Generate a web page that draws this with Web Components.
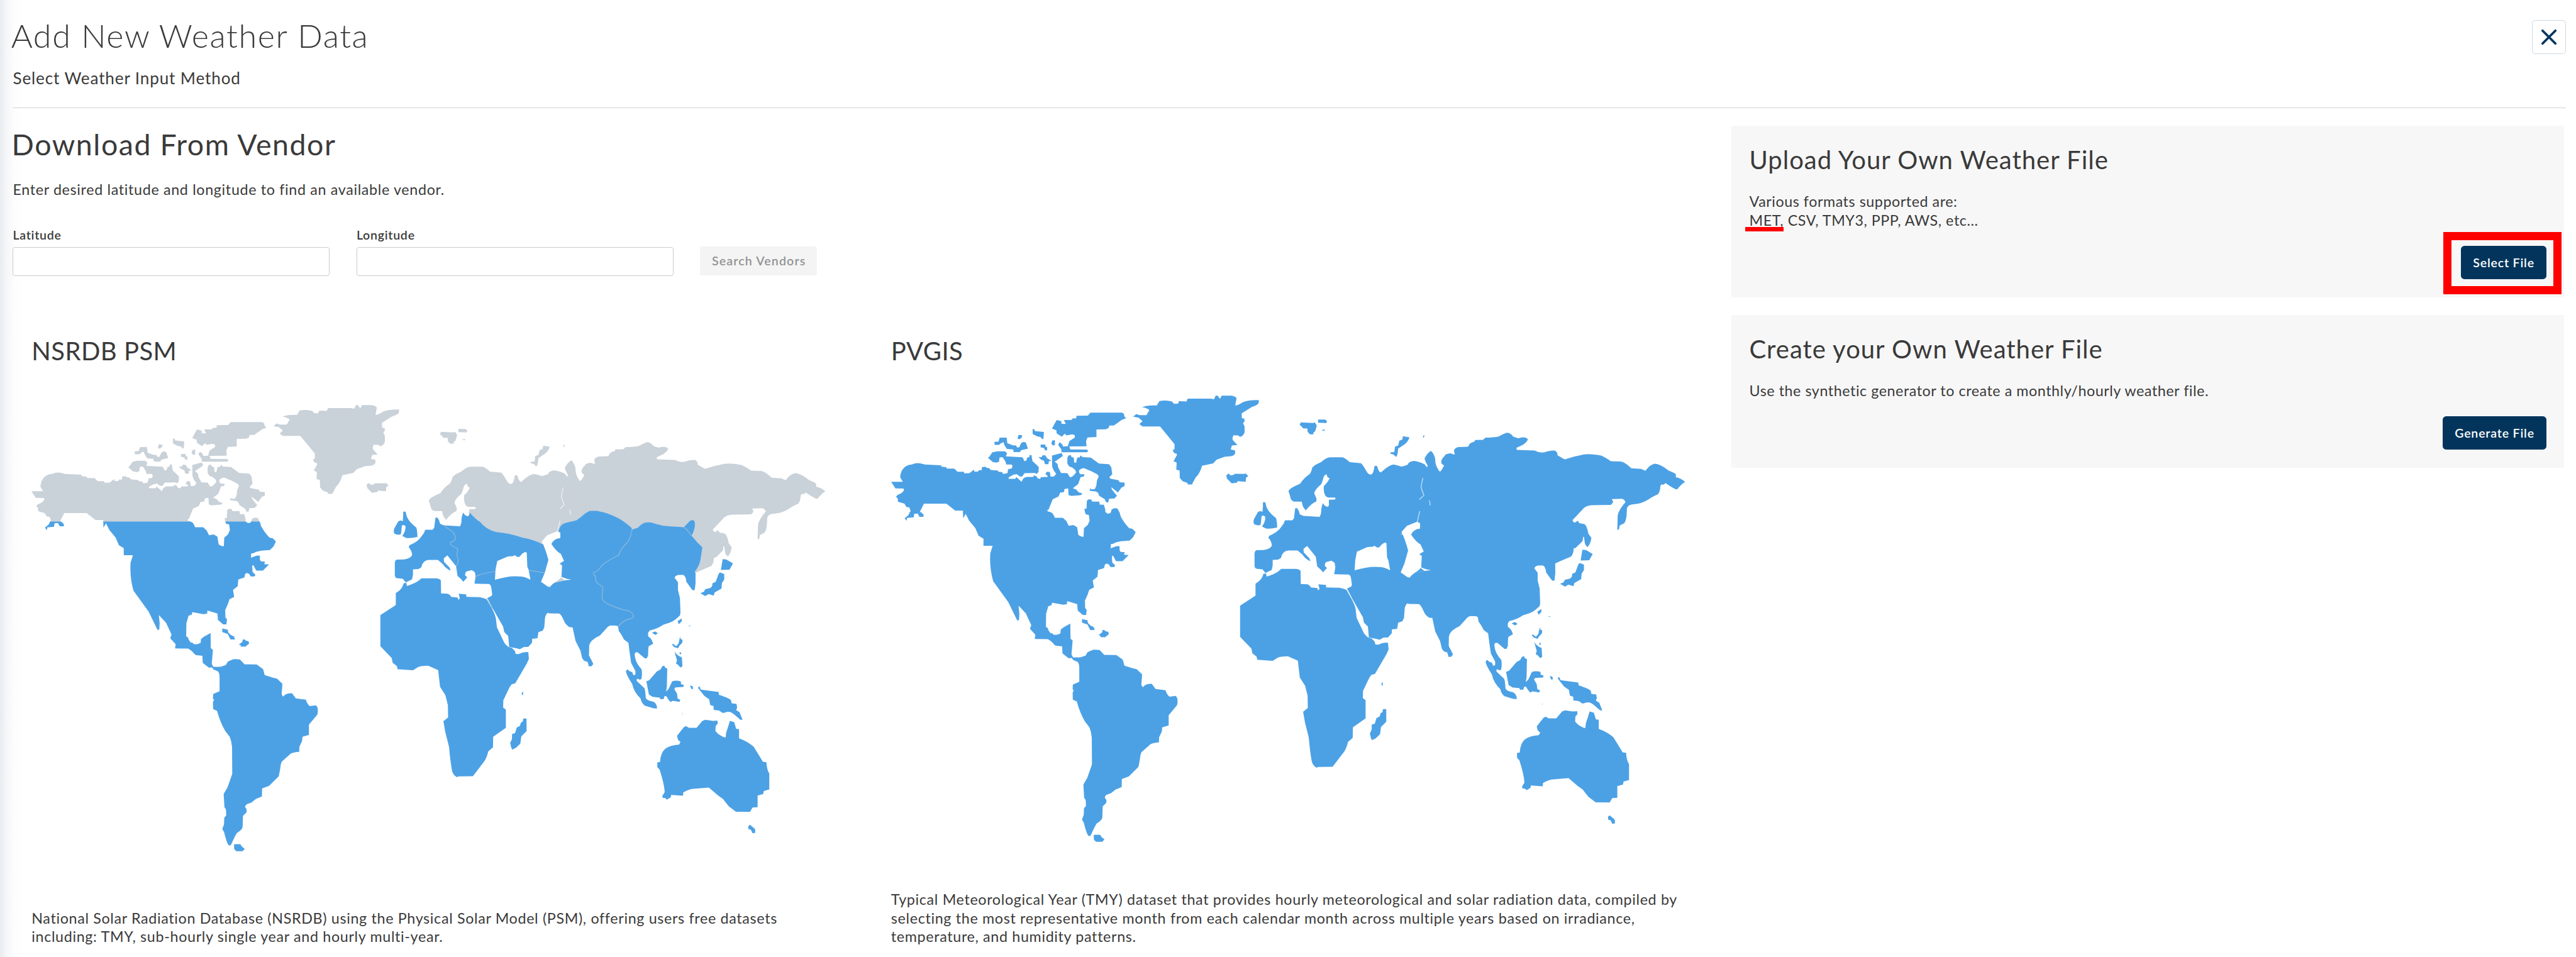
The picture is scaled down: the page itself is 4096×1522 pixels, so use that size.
<!DOCTYPE html>
<html lang="en">
<head>
<meta charset="utf-8">
<title>Add New Weather Data</title>
<style>
    html, body {
        margin: 0;
        background: #fff;
        overflow: hidden;
    }
</style>
</head>
<body>
<weather-page>
    <page-header slot="header" title="Add New Weather Data" subtitle="Select Weather Input Method"></page-header>
    <vendor-search slot="search"></vendor-search>
    <vendor-card slot="vendor" name="NSRDB PSM">
        <world-map coverage="partial" slot="map"></world-map>
        National Solar Radiation Database (NSRDB) using the Physical Solar Model (PSM), offering users free datasets<br>including: TMY, sub-hourly single year and hourly multi-year.
    </vendor-card>
    <vendor-card slot="vendor" name="PVGIS">
        <world-map slot="map"></world-map>
        Typical Meteorological Year (TMY) dataset that provides hourly meteorological and solar radiation data, compiled by<br>selecting the most representative month from each calendar month across multiple years based on irradiance,<br>temperature, and humidity patterns.
    </vendor-card>
    <file-panel slot="side" heading="Upload Your Own Weather File">
        Various formats supported are:<br><mark-under>MET,</mark-under> CSV, TMY3, PPP, AWS, etc...
        <action-button slot="action" highlighted>Select File</action-button>
    </file-panel>
    <file-panel slot="side" heading="Create your Own Weather File" compact>
        Use the synthetic generator to create a monthly/hourly weather file.
        <action-button slot="action">Generate File</action-button>
    </file-panel>
</weather-page>

<script>
class WeatherPage extends HTMLElement {

    constructor() {
        super();
        this.root = this.attachShadow({ mode: 'open' });
        this.root.innerHTML = `<style>
    :host {
        display: flex;
        flex-direction: column;
        box-sizing: border-box;
        width: 4400px;
        height: 1635px;
        padding: 0 17px 0 22px;
        overflow: hidden;
        zoom: .93091;
        color: #3a3a3a;
        font: 25px/32px Lato, "Open Sans", sans-serif;
        letter-spacing: .72px;
        background: linear-gradient(90deg, #e9ecf0 0, #f6f7f9 12px, #fdfdfe 26px, #fff 40px);
    }

    .content {
        flex: 1;
        display: grid;
        grid-template-columns: 2935px 1423px;
        min-height: 0;
    }

    .main {
        display: flex;
        flex-direction: column;
        min-height: 0;
    }

    .vendors {
        flex: 1;
        display: grid;
        grid-template-columns: 1468px 1467px;
    }

    .side {
        display: flex;
        flex-direction: column;
        gap: 30px;
        padding-top: 30px;
    }
</style>
<slot name="header"></slot>
<div class="content">
    <div class="main">
        <slot name="search"></slot>
        <div class="vendors"><slot name="vendor"></slot></div>
    </div>
    <div class="side"><slot name="side"></slot></div>
</div>`;
    }
}
customElements.define('weather-page', WeatherPage);

class PageHeader extends HTMLElement {

    constructor() {
        super();
        this.root = this.attachShadow({ mode: 'open' });
        this.root.innerHTML = `<style>
    :host {
        display: flex;
        justify-content: space-between;
        align-items: flex-start;
        box-sizing: border-box;
        height: 185px;
        padding-top: 26px;
        border-bottom: 2px solid #d3d3d3;
    }

    .title {
        margin: 0 0 0 -3px;
        font-size: 56px;
        line-height: 70px;
        font-weight: 300;
        letter-spacing: 1.7px;
    }

    .subtitle {
        margin: 20px 0 0;
        font-size: 28px;
        line-height: 36px;
        letter-spacing: .95px;
    }

    .close {
        display: flex;
        align-items: center;
        justify-content: center;
        box-sizing: border-box;
        width: 58px;
        height: 58px;
        margin-top: 8px;
        padding: 0;
        border: 2px solid #ccd7e1;
        border-radius: 6px;
        background: #fff;
    }
</style>
<div>
    <h1 class="title"></h1>
    <p class="subtitle"></p>
</div>
<button class="close" aria-label="Close">
    <svg width="28" height="28" viewBox="0 0 28 28" fill="none" stroke="#03355c" stroke-width="4" stroke-linecap="round">
        <path d="M3 3l22 22M25 3L3 25"></path>
    </svg>
</button>`;
    }

    static get observedAttributes() {
        return ['title', 'subtitle'];
    }

    attributeChangedCallback(attrName, oldVal, newVal) {
        this.root.querySelector('.' + attrName).textContent = newVal;
    }
}
customElements.define('page-header', PageHeader);

class TextField extends HTMLElement {

    constructor() {
        super();
        this.root = this.attachShadow({ mode: 'open' });
        this.root.innerHTML = `<style>
    :host {
        display: flex;
        flex-direction: column;
        width: 541px;
    }

    label {
        font-size: 21px;
        line-height: 26px;
        font-weight: 600;
        letter-spacing: .8px;
        margin-bottom: 7px;
    }

    input {
        box-sizing: border-box;
        width: 100%;
        height: 50px;
        border: 2px solid #cbcbcb;
        border-radius: 4px;
        background: #fff;
    }
</style>
<label><slot></slot></label>
<input type="text">`;
    }
}
customElements.define('text-field', TextField);

class VendorSearch extends HTMLElement {

    constructor() {
        super();
        this.root = this.attachShadow({ mode: 'open' });
        this.root.innerHTML = `<style>
    :host {
        display: block;
        padding-top: 32px;
    }

    h2 {
        margin: 0 0 0 -2px;
        font-size: 50px;
        line-height: 60px;
        font-weight: 400;
        letter-spacing: 1.65px;
    }

    p {
        margin: 31px 0 0;
    }

    .row {
        display: flex;
        align-items: flex-end;
        gap: 46px;
        margin-top: 49px;
    }
</style>
<h2>Download From Vendor</h2>
<p>Enter desired latitude and longitude to find an available vendor.</p>
<div class="row">
    <text-field>Latitude</text-field>
    <text-field>Longitude</text-field>
    <action-button disabled>Search Vendors</action-button>
</div>`;
    }
}
customElements.define('vendor-search', VendorSearch);

class ActionButton extends HTMLElement {

    constructor() {
        super();
        this.root = this.attachShadow({ mode: 'open' });
        this.root.innerHTML = `<style>
    :host {
        display: block;
        position: relative;
    }

    button {
        display: block;
        height: 57px;
        padding: 0 20px 0 21px;
        border: 0;
        border-radius: 6px;
        background: #03355c;
        color: #fff;
        font: 600 21px/57px Lato, "Open Sans", sans-serif;
        letter-spacing: .9px;
        white-space: nowrap;
    }

    :host([disabled]) button {
        height: 50px;
        line-height: 50px;
        margin-bottom: 1px;
        padding: 0 19px 0 20px;
        border-radius: 4px;
        background: #f4f4f4;
        color: #939393;
        letter-spacing: 1.25px;
    }

    /* marker frame drawn around the button */
    :host([highlighted])::after {
        content: "";
        position: absolute;
        inset: -24px -26px -26px -30px;
        border: 14px solid #f00;
    }
</style>
<button><slot></slot></button>`;
    }
}
customElements.define('action-button', ActionButton);

class MarkUnder extends HTMLElement {

    constructor() {
        super();
        this.root = this.attachShadow({ mode: 'open' });
        this.root.innerHTML = `<style>
    :host {
        display: inline-block;
        position: relative;
    }

    :host::after {
        content: "";
        position: absolute;
        left: -7px;
        width: 66px;
        bottom: -2px;
        height: 7px;
        background: #f00;
    }
</style><slot></slot>`;
    }
}
customElements.define('mark-under', MarkUnder);

class FilePanel extends HTMLElement {

    constructor() {
        super();
        this.root = this.attachShadow({ mode: 'open' });
        this.root.innerHTML = `<style>
    :host {
        display: flex;
        flex-direction: column;
        box-sizing: border-box;
        height: 293px;
        padding: 31px;
        background: #f7f7f7;
        letter-spacing: .6px;
    }

    :host([compact]) {
        height: 261px;
    }

    h2 {
        margin: 0 0 29px;
        font-size: 43px;
        line-height: 54px;
        font-weight: 400;
        letter-spacing: 1.05px;
    }

    .action {
        display: flex;
        justify-content: flex-end;
        margin-top: auto;
    }
</style>
<h2></h2>
<div class="text"><slot></slot></div>
<div class="action"><slot name="action"></slot></div>`;
    }

    static get observedAttributes() {
        return ['heading'];
    }

    attributeChangedCallback(attrName, oldVal, newVal) {
        this.root.querySelector('h2').textContent = newVal;
    }
}
customElements.define('file-panel', FilePanel);

class VendorCard extends HTMLElement {

    constructor() {
        super();
        this.root = this.attachShadow({ mode: 'open' });
        this.root.innerHTML = `<style>
    :host {
        display: flex;
        flex-direction: column;
        box-sizing: border-box;
        padding: 101px 32px 18px;
    }

    h2 {
        margin: 0;
        font-size: 43px;
        line-height: 54px;
        font-weight: 400;
        letter-spacing: .5px;
    }

    .map {
        flex: 1;
        display: flex;
        align-items: center;
        padding-bottom: 34px;
    }

    .text {
        white-space: nowrap;
    }
</style>
<h2></h2>
<div class="map"><slot name="map"></slot></div>
<div class="text"><slot></slot></div>`;
    }

    static get observedAttributes() {
        return ['name'];
    }

    attributeChangedCallback(attrName, oldVal, newVal) {
        this.root.querySelector('h2').textContent = newVal;
    }
}
customElements.define('vendor-card', VendorCard);

class WorldMap extends HTMLElement {

    constructor() {
        super();
        this.root = this.attachShadow({ mode: 'open' });
        this.root.innerHTML = `<style>
    :host {
        display: block;
        --covered: #4ca1e5;
        --uncovered: #4ca1e5;
        --border: none;
    }

    :host([coverage="partial"]) {
        --uncovered: #c9d1d9;
        --border: #8fb9da;
    }

    svg {
        display: block;
    }

    .off {
        fill: var(--uncovered);
    }

    .on {
        fill: var(--covered);
    }

    .sea {
        fill: #fff;
    }

    .line {
        fill: none;
        stroke: var(--border);
        stroke-width: 4;
    }

    .river {
        fill: none;
        stroke: #fff;
        stroke-opacity: .7;
        stroke-width: 4;
        stroke-linecap: round;
    }
</style>
<svg width="1356" height="763" viewBox="72 96 4068 2289">
    <!-- alaska, canada -->
    <g class="off">
        <path d="M72 538L132 538 118 515Q122 465 162 452L180 449Q200 440 222 444L245 450 328 454 330 461 354 463 358 471 395 471 412 487 444 487 447 495 473 494 496 476 499 487 517 486 522 479 536 479 537 463 555 461 561 467 574 468 583 478 618 480 622 487 640 488 646 498 668 494 671 474 690 470 694 457 688 450 662 450 658 435 645 415 640 412 627 414 625 435 612 440 592 437 568 415 576 409 590 388 615 382 655 382 666 392 660 408 745 413 755 433 766 428 768 415 780 411 781 401 791 401 796 432 828 462 827 488 817 498 810 493 755 494 744 511 730 511 717 500 700 501 674 516 674 523 708 523 714 514 740 538 750 520 765 513 800 513 803 505 817 510 822 520 835 524 840 514 873 513 874 508 862 499 870 487 885 488 889 512 905 512 918 498 905 480 897 460 896 404 945 391 952 405 935 418 910 435 925 447 928 465 943 493 975 494 988 515 1000 512 1010 502 1020 490 1015 478 1000 465 985 460 975 445 975 415 981 403 993 402 995 410 1008 415 1010 440 1020 440 1025 415 1038 413 1043 403 1053 412 1095 414 1137 445 1188 448 1200 463 1205 500 1190 515 1195 522 1237 530 1243 541 1268 542 1268 560 1252 568 1234 593 1200 566 1203 578 1229 610 1216 624 1189 625 1184 645 1173 642 1167 628 1138 610 1132 595 1122 588 1089 584 1092 571 1098 577 1115 576 1123 560 1127 530 1136 510 1128 500 1100 485Q1075 475 1060 468 1040 470 1034 482 1034 495 1042 500L1062 500 1060 511 1043 514 1030 550 1003 571 1020 578 1033 592 1052 598 1044 607 995 611 981 606 979 572 960 575 958 591 938 594 930 613 900 628 878 682 872 682 874 690 890 694 890 696 440 696 440 686 400 686 355 650 240 650 217 696 167 696 172 688 165 670 150 667 140 650 107 641 105 621 96 617 104 606Q132 595 138 580L136 573 94 572Z"></path>
        <path d="M1062 676L1073 676 1075 635 1085 628 1099 630 1101 640 1138 640 1141 655 1162 656 1169 680 1170 696 1066 696ZM1197 696L1202 680Q1215 671 1232 675L1242 696Z"></path>
        <path d="M896 265L920 222 944 227 945 241 967 242 957 222 998 221 1000 214 1020 213 1022 200 1080 199 1093 184 1255 184 1265 190 1267 203 1276 213 1255 220 1213 250 1190 250 1187 262 1172 269 1124 270 1124 309 1078 311 1071 330 1073 356 985 357 990 372 1075 373 1082 380 1075 387 945 387 944 372 928 350 935 335 950 347 952 357 977 356 985 330 1013 312 1013 300 1000 295 970 301 962 292 946 307 920 290 919 275Z"></path>
        <path d="M797 268L807 270 808 278 855 283 852 318 848 320 835 308 822 306 797 293ZM724 298L743 300 742 310 730 320 720 318ZM601 334L622 332 628 312 664 312 667 340 695 351 712 352 717 362 728 362 738 340 750 334 762 337 773 368 738 376 732 386 700 386 697 372 665 370 652 350 648 335 635 340 625 349 602 349ZM838 347L862 347 863 358 872 362 870 378 860 376 855 365 838 362ZM897 327L911 325 911 350 900 352 893 342ZM827 411L843 412 848 402 862 403 872 418 893 430 880 433 878 448 860 448 855 430 840 425Z"></path>
    </g>
    <g class="on">
        <path d="M440 694L885 694Q898 696 902 704L911 723 952 723 970 740 982 764 1006 760 1025 771 1031 810Q1040 820 1058 820L1060 776 1079 760 1089 737 1085 708 1069 705 1066 694 1170 694 1182 702 1196 699 1197 694 1242 694 1249 718Q1270 755 1292 776L1308 779 1325 796 1312 822 1294 840 1250 843 1222 849 1210 856 1198 857 1197 879 1225 869 1242 868 1243 890 1248 898 1269 899 1265 912 1289 914 1258 945 1224 945 1209 917 1203 920 1205 952 1220 967 1215 975 1195 975 1188 962 1175 957 1167 963 1163 981 1132 990 1129 1025 1105 1044 1111 1080 1087 1092 1078 1118 1065 1147 1066 1185 1074 1195 1071 1221 1054 1221 1028 1198 1025 1165 974 1150 972 1166 953 1168 897 1158 893 1171 877 1176 866 1215 865 1282 875 1288 878 1300 888 1313 900 1316 903 1322 922 1322 939 1316 941 1296 955 1284 990 1265 991 1342 1002 1352 996 1423 1005 1440 982 1443 950 1418 948 1382 913 1378 892 1356 875 1345 808 1344 811 1322 783 1292 790 1273 762 1213 725 1173 729 1215 727 1247 718 1249 672 1155 640 1110 595 1048Q575 980 580 905L592 866 545 866 545 830 520 815 503 775 472 738 454 703 441 725Z"></path>
        <path d="M167 694L225 694 238 707 238 718 217 718 208 701 190 703 188 720 153 724 152 738 141 725 161 708Z"></path>
    </g>
    <!-- caribbean, south america -->
    <g class="on" transform="translate(510 1200)">
        <path d="M540 42L568 48 570 62 583 75 600 83 605 98 582 98 568 70 540 60ZM624 125L643 110 645 98 655 98 658 103 675 108 677 120 658 135 634 134 634 126Z"></path>
        <path d="M485 238L530 238 558 229 568 212Q590 200 605 199L630 200 654 225 716 226 749 250 757 280Q775 287 820 299L848 325 844 380 852 391Q865 373 898 374L917 400 968 407Q975 430 988 440L1020 436Q1035 450 1027 483L984 535 984 587 951 597 949 618 935 648 934 674Q905 675 890 684L844 725Q838 740 836 765L829 800 780 848 744 862 743 903 713 915 688 934 664 943 656 955 665 970 664 984 646 1002 644 1060Q640 1075 615 1090 605 1105 584 1152L575 1154Q565 1150 549 1085L540 1070 549 1045 550 1012 560 1000 559 970 551 958 547 890 567 855 591 787 590 650Q588 620 578 597L555 567Q530 525 513 464L493 455 492 420 498 405 492 403 493 378 526 363 526 290Q525 268 517 261L495 252Z"></path>
        <path d="M600 1148L632 1147 641 1160 655 1171 644 1183 612 1183 601 1173Z"></path>
    </g>
    <!-- greenland, iceland, svalbard, north europe -->
    <g class="off" transform="translate(1230 0)">
        <path d="M82 205L98 191 115 197 150 197 165 172Q160 163 128 156 150 145 203 147L217 124Q255 118 280 127L292 139 312 138 317 125 355 127 362 112 480 112 496 115 505 97 515 97 527 113 536 97 585 97Q605 100 612 110L605 147Q620 147 645 130 680 118 727 120L724 137Q715 147 690 155L638 188 639 212 652 215 653 228 645 238 653 255 653 285Q645 305 630 308L620 301 596 300Q588 315 593 325L616 350 588 352 582 372 605 378 604 395Q595 408 575 408L550 410 510 425 492 444 435 456Q425 495 403 515L383 552 362 552 360 544 335 535 321 518 320 480 303 476 305 440 289 433 307 400 303 393 293 392 284 376 294 371 294 345 220 255 130 255 114 243 130 227 110 210Z"></path>
        <path d="M559 505L572 496 580 505 597 503 603 497 650 498 659 496 672 509 660 517 659 538 617 535 615 542 587 546 563 522ZM935 247L941 234 1003 237 1013 234 1023 250 1015 280 1007 284 1005 295 988 295 976 282 975 265 953 264 945 254ZM1029 219L1065 219 1075 226 1073 237 1030 235ZM1047 273L1064 270 1062 278Z"></path>
        <path d="M878 585Q885 570 938 548 955 520 985 500 995 490 1000 465 1015 450 1045 438 1070 415 1090 413L1155 413Q1170 418 1192 438L1250 443Q1262 455 1278 485 1290 505 1305 500 1315 490 1318 460 1325 450 1333 460 1340 490 1352 490 1390 455 1415 450 1430 452 1455 460 1470 460 1490 450 1490 436 1520 431 1540 432 1575 448L1588 465 1591 455Q1580 438 1575 420 1585 395 1607 380 1620 385 1630 420 1628 455 1653 486 1660 485 1675 455L1661 443 1661 430Q1670 405 1705 392L1730 400 1727 375Q1735 362 1750 360L1797 359 1797 700 1500 810 1400 800 1100 780 1085 650 1085 630 1115 629 1120 622 1115 619 1080 619 1068 612Q1055 590 1060 558 1075 548 1089 520L1078 515 1073 500Q1065 502 1058 512 1055 530 1046 550 1010 580 1010 598L1022 625 1020 640Q1000 645 966 685L952 665 946 640 905 640Q888 632 887 615Z"></path>
    </g>
    <g class="off" transform="translate(2430 90)">
        <path d="M264 215L298 220Q290 245 270 258L240 278Q238 310 230 321L215 308 200 304 200 298 220 296 224 268 240 262 246 238 262 231ZM368 212L374 209 373 219 368 224Z"></path>
    </g>
    <!-- siberia, far east -->
    <g class="off" transform="translate(2910 180)">
        <path d="M0 220Q20 208 50 220L47 195Q55 182 75 181L115 180Q123 175 125 165 135 155 150 153L155 144 195 143 207 132Q250 131 275 126 310 107 320 107 335 108 350 127L375 135Q410 123 425 140 420 155 400 168L366 184 368 195 460 198Q490 212 510 207 545 195 565 199L575 210 577 223 600 236Q612 247 625 240 660 228 690 223 730 210 800 224 820 232 850 253L900 254Q920 255 955 289L1005 292 1027 302Q1050 270 1075 266 1100 265 1145 300L1175 313 1184 322 1182 334Q1215 342 1230 359 1210 370 1190 397 1180 400 1130 365L1122 372 1108 373Q1102 380 1103 390 1100 415 1090 423 1075 430 1060 437 1020 465 990 470L955 475Q930 480 932 505 930 565 915 573L895 582 892 600Q885 610 883 600L885 530Q888 505 925 462 920 447 905 445L855 447 862 463 850 477 750 478Q720 480 705 500L670 537 653 555 660 567 670 565 680 557 688 570 715 575Q728 585 735 625L750 645Q748 670 732 692 725 692 717 675L712 640 708 640 705 662 670 697 659 700Q660 725 645 742L590 765 562 778 500 700 400 600 0 520Z"></path>
    </g>
    <!-- british isles -->
    <g class="on" transform="translate(1230 0)">
        <path d="M747 643L759 643 766 670Q780 700 815 725 820 750 820 773 780 782 760 777L742 767Q760 745 759 718 750 706 740 715 738 745 735 758 725 765 703 757 695 745 702 728L722 692 735 688 745 692 747 665Z"></path>
    </g>
    <!-- europe, middle east, india -->
    <g transform="translate(1830 540)">
        <path class="on" d="M355 173L438 178 445 160Q445 125 455 108L463 120 478 127 485 120 488 108Q520 145 540 155 570 195 625 208 690 213 760 237 810 245 862 270L943 203Q950 170 975 162L1035 147Q1060 130 1080 112L1102 99 1140 99Q1200 110 1250 137 1290 160 1318 188L1320 640 1248 692 1240 687 1210 686Q1195 690 1185 705L1155 738Q1105 760 1100 790L1099 840 1110 860 1121 884 1112 895 1098 896 1092 873 1075 868Q1065 860 1063 850L1055 815 1030 765 1020 720 1015 696 1000 695Q980 685 972 665 955 625 945 625L895 624 887 621Q873 635 873 655L870 695 862 713 840 720 835 752 808 755 807 775 788 796 765 797 745 808 728 803 690 797 685 740 665 720 659 692 635 650 605 598 578 545 600 535 603 525 598 490Q595 475 585 474L512 472 518 437 515 415Q505 405 497 403L470 410Q462 420 465 430L475 440 455 462 445 450 425 432 418 383 400 360Q380 335 373 327L355 342 356 360 385 390 390 405Q365 395 350 372L325 350 275 350Q245 355 240 388L225 397 197 399 197 425 192 450 160 466 145 447 115 444Q104 442 104 425L104 365Q106 350 115 349L150 348Q185 345 193 325 190 300 175 285L180 275Q225 255 240 230 255 215 260 196L298 196 306 185 312 135 320 132 330 145 336 165Z"></path>
        <path class="sea" d="M617 452L620 400 629 356 655 345 683 333 710 331 718 326 732 335 743 334 757 318 772 309 780 313 783 385 790 402 799 452Q770 435 740 435 690 430 617 452ZM857 255L885 224 937 203 952 210 952 238Q920 240 906 268 930 305 955 320L971 355 948 370 961 378 958 437 985 447 1008 451 975 455 930 465Q912 470 900 489L888 487 853 462 872 417 891 350Q875 290 857 255Z"></path>
        <path class="off" d="M918 468Q945 455 955 440L975 455Z"></path>
        <path class="line" d="M358 173Q370 188 385 195 415 215 415 240 410 255 390 260 383 272 405 282 430 290 425 305 418 325 428 345 432 365 418 383M515 437Q550 418 618 410M790 402L872 417M578 545L605 600"></path>
    </g>
    <!-- china, indochina, sumatra -->
    <g transform="translate(2910 180)">
        <path class="on" d="M240 555L270 545Q295 520 310 519 340 515 355 524 390 535 430 538L505 543 538 509Q550 504 558 510 570 535 545 587L575 622 600 646 590 710Q585 740 560 772L565 778 565 830 561 864 552 866 545 860 518 822Q515 790 500 787L475 788Q460 793 458 802L475 825 475 865 485 905 487 960Q490 995 480 1000 455 1025 430 1033L400 1042Q370 1063 330 1072 318 1083 323 1103 340 1112 348 1140L325 1153Q322 1165 322 1200L315 1215 305 1215 270 1185Q255 1178 253 1195 255 1235 288 1270 293 1290 288 1320L280 1324 265 1319 263 1330 303 1368Q308 1380 310 1418 317 1433 350 1437 368 1448 368 1472L350 1471 305 1457Q288 1445 283 1420 250 1390 240 1345 210 1300 208 1280L216 1271 228 1282 240 1285 247 1302 257 1298 257 1280 235 1238 228 1190 221 1135 198 1118Q185 1090 172 1075L168 1050 168 620Z"></path>
        <path class="on" d="M704 706L722 708 757 728 739 760 695 762ZM682 785Q685 775 692 775L712 783 712 810 700 830 698 857 663 877 658 893 632 885 615 896 590 881 608 873 615 860 640 855 650 845 652 830 668 823ZM473 1025L494 1010 494 1025 480 1040ZM341 1084L358 1077 372 1086 360 1095ZM528 1048L539 1046 537 1051Z"></path>
        <path class="line" d="M240 555Q235 590 215 622 180 655 172 685L160 692Q95 725 80 745 65 770 45 773 37 780 52 795 50 820 65 832 90 845 90 855L85 905Q95 930 130 943 190 968 225 972 250 985 247 1003 240 1012 220 1014 195 1022 168 1052M505 543L520 555 545 587"></path>
    </g>
    <path class="river" transform="translate(2430 90)" d="M367 430Q358 460 358 480L372 518 350 538M399 545Q405 555 403 568M350 600L338 655"></path>
    <!-- africa, madagascar -->
    <g class="on" transform="translate(1770 1200)">
        <path d="M90 -27L169 -78 169 -140Q200 -155 210 -190L223 -192 226 -176Q280 -192 300 -215L375 -215Q390 -215 400 -205L401 -138 435 -136Q450 -130 452 -120L485 -117 491 -104 497 -115 491 -136 530 -133 531 -120 600 -119Q620 -115 635 -108L665 -55Q678 -30 682 -10L687 35 725 115Q738 132 748 137L765 142 780 158 783 172 798 173Q825 160 848 163L851 198 840 222 781 323 763 328 752 343 720 410 719 447 733 457 733 551 668 597 667 651 643 672Q635 705 623 722L564 799 490 800 482 804Q462 792 457 770 448 720 442 650L436 625Q420 570 413 517L437 498 436 435 423 383 396 341 386 255 335 233Q290 235 283 240L257 256 178 250 175 235 153 217 148 193 90 133Z"></path>
        <path d="M822 503L839 503 839 568 812 595 807 632 785 653 765 663 760 650 755 628 764 610 765 582 780 578 789 549 805 541 810 525 820 518ZM821 364L821 386 813 375Z"></path>
    </g>
    <!-- south east asia, oceania -->
    <g class="on" transform="translate(2910 1140)">
        <path d="M313 372L328 367 367 322 385 312 395 295 405 293 410 303 420 307 418 400 414 425 427 412 445 373Q465 366 490 373L490 386 505 392 503 401 462 404 456 412 470 435 473 460 487 468 483 478 448 472 437 479 425 465 415 448 405 450 402 463 384 464 382 456 345 452 326 440Z"></path>
        <path d="M486 143L488 155 498 160 497 175 482 190 475 203 455 197 444 184 450 181 466 193 478 178ZM457 219Q470 240 495 250L498 295 488 302 475 288 465 282 470 265ZM483 225L491 224 491 233 484 234ZM536 394L550 397 553 411 545 413ZM494 532L500 541 499 543Z"></path>
        <path d="M577 405L585 398 592 415 683 427 685 442Q740 460 747 470L750 485 775 488 778 508 773 520 790 530 806 570 795 570 760 540Q745 528 730 529L705 535 685 522 658 519 657 500 640 494 635 465 610 447 592 425Z"></path>
        <path d="M470 652L505 608 515 602 532 611 570 611 600 575 615 570 655 575 677 574 679 588 668 602 667 628Q690 655 719 661L722 635 730 612 741 575 763 582 773 616 788 618 788 665Q830 680 862 707 880 735 910 785L928 787Q930 825 943 845L943 927 915 935 912 950 883 958 883 1018 857 1019 844 1042 772 1041 735 1013 705 975 680 957 633 917 545 924Q520 930 502 942L501 959 440 955 438 967 418 979 410 971 397 970 395 960 407 940Q405 900 381 825L369 812 369 788 383 786Q385 740 410 718 435 700 480 697L488 684 475 672ZM835 1115L844 1108 870 1130 871 1148 858 1152 848 1133 836 1130Z"></path>
    </g>
</svg>`;
    }
}
customElements.define('world-map', WorldMap);
</script>
</body>
</html>
